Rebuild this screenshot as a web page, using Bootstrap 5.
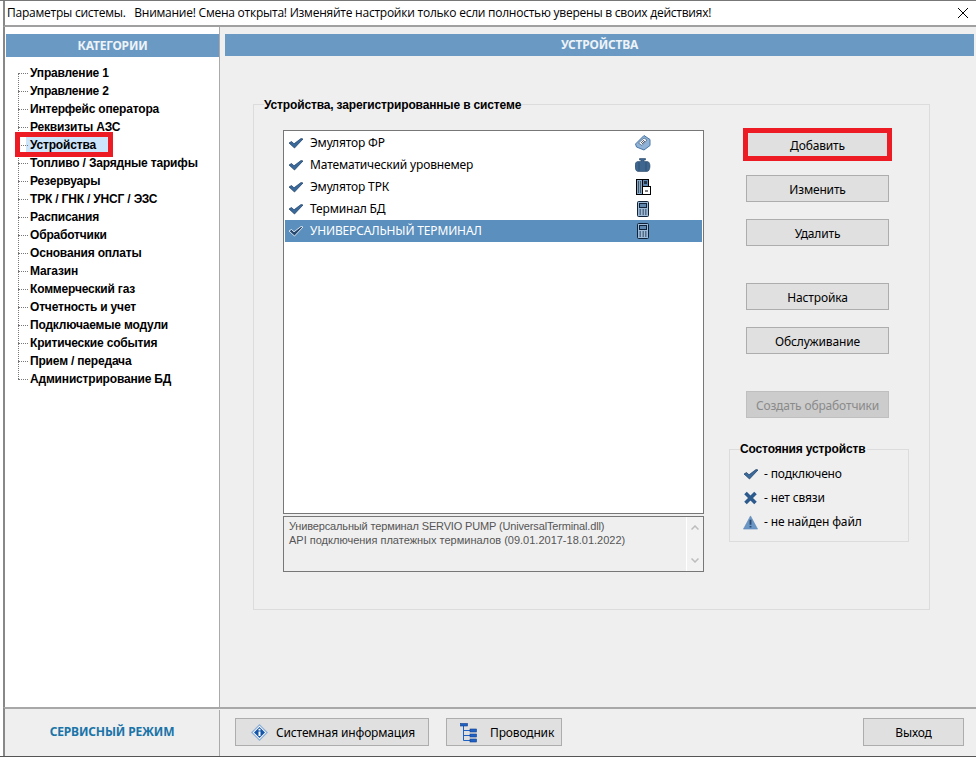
<!DOCTYPE html>
<html lang="ru">
<head>
<meta charset="utf-8">
<title>Параметры системы</title>
<link href="https://cdn.jsdelivr.net/npm/bootstrap@5.3.0/dist/css/bootstrap.min.css" rel="stylesheet">
<style>
html,body{margin:0;background:#fff;overflow:hidden}
body{font-family:"Noto Sans",sans-serif;font-size:12px;line-height:14px;letter-spacing:-.15px;color:#000}
.win{width:976px;height:757px;border-top:1px solid #777;border-bottom:1px solid #555}
.win-title{height:26px;margin-left:3px;border-left:2px solid #888;border-bottom:2px solid #a0a0a0;padding-left:2px;background:#fff;white-space:pre;font-family:"Open Sans",sans-serif;font-size:12px;letter-spacing:-.02em}
.win-x{margin-right:8px}
.win-body{height:680px;margin-left:3px;border-left:2px solid #888}
.side{width:215px;background:#fff;border-right:1px solid #aaa;padding-top:7px}
.side-head{margin-left:1px;height:23px;background:#6a9ac4;color:#eef3f8;font:700 12px/23px "Noto Sans",sans-serif;letter-spacing:-.2px;text-align:center}
.tree{list-style:none;margin:7px 0 0;padding:0 0 0 13px;font:700 12px/18px "Liberation Sans",sans-serif;letter-spacing:-.18px;position:relative}
.tree::before{content:"";position:absolute;left:13px;top:9px;bottom:9px;border-left:1px dotted #777}
.tree li{height:18px;padding-left:12px;position:relative;white-space:nowrap}
.tree li::before{content:"";position:absolute;left:0;top:9px;width:10px;border-top:1px dotted #777}
.tree-sel{background:#cde5fb;padding:1px 13px 1px 4px;margin-left:-4px}
.red-a{position:absolute;left:-3px;top:-4px;width:98px;height:25px;border:5px solid #ed1c24;pointer-events:none}
.pane{flex:1;background:#efefef;padding-top:7px}
.pane-head{margin:0 2px 0 5px;height:22px;background:#6a9ac4;color:#eef3f8;font:700 12px/22px "Noto Sans",sans-serif;letter-spacing:-.2px;text-align:center}
.gr1{margin:40px 46px 0 33px;height:514px;border:1px solid #dcdcdc;padding:18px 0 0 29px;min-width:0}
.gr1 legend,.gr2 legend{float:none;width:auto;padding:0;font:700 12px/14px "Liberation Sans",sans-serif;letter-spacing:-.15px}
.gr1 legend{margin:0 0 0 -19px;padding-top:2px}
.lst{width:421px;height:384px;border:1px solid #777;background:#fff;padding:1px}
.lst-row{height:22px;padding:0 2px 0 3px}
.lst-row.on{background:#5b8fbd;color:#fff}
.lst-txt{margin-left:7px;width:325px}
.lst-ico{width:16px;height:16px}
.dsc{width:421px;height:56px;margin-top:2px;border:1px solid #777;background:#efefef;padding:2px 5px;font:11px/14px "Liberation Sans",sans-serif;letter-spacing:0;color:#555}
.dsc::first-line{letter-spacing:-.15px}
.dsc-bar{position:absolute;right:0;top:0;bottom:0;width:17px;background:#f2f2f2;border-left:1px solid #fff}
.rcol{width:143px;margin-left:42px;padding-top:1px}
.wbtn{display:block;width:143px;height:27px;padding:2px 0 0;background:#e0e0e0;border:1px solid #adadad;border-radius:0;font:12px/14px "Noto Sans",sans-serif;letter-spacing:-.15px;color:#000}
.wbtn:hover{background:#e0e0e0;border-color:#adadad;color:#000}
.gap1{margin-top:17px}.gap2{margin-top:37px}
.wbtn-red{outline:5px solid #ed1c24;outline-offset:-2px;border-color:#e0e0e0}
.wbtn:disabled{background:#ccc;border-color:#bfbfbf;color:#8a8a8a;opacity:1}
.gr2{margin:24px 0 0 -17px;width:180px;height:100px;border:1px solid #dcdcdc;padding:0 0 0 13px}
.gr2 legend{margin:0 0 0 -3px;padding:0 2px 0 0}
.st-row{height:24px}
.st-row svg{margin-right:6px}
.st-first{margin-top:6px}
.foot{height:49px;margin-left:3px;border-left:2px solid #888;border-top:2px solid #a8a8a8;background:#efefef}
.foot-l{width:215px;border-right:1px solid #aaa;color:#1a74a8;font:700 12px/14px "Noto Sans",sans-serif;text-align:center;padding-bottom:2px;margin-top:1px}
.foot-r{flex:1;padding:9px 12px 0 15px}
.fbtn{height:28px;background:#e0e0e0;border:1px solid #adadad;border-radius:0;padding:1px 0 0;font:12px/14px "Noto Sans",sans-serif;letter-spacing:-.15px;color:#000}
.fbtn:hover{background:#e0e0e0;border-color:#adadad;color:#000}
.f1{width:194px;padding-left:15px}.f2{width:116px;margin-left:17px;padding-left:13px}.f3{width:101px;margin-left:auto}
.f1 svg{margin-right:8px}.f2 svg{margin-right:13px}
</style>
</head>
<body>
<svg width="0" height="0" class="position-absolute">
<defs>
<symbol id="i-check" viewBox="0 0 15 12"><path d="M1 6 3.500 4.500 6 6.800 13 1.500 15 2 6.500 11Z" fill="#3a6a9c" stroke="#1c3d63" stroke-width=".7"/></symbol>
<symbol id="i-checkw" viewBox="0 0 15 12"><path d="M1 6 3.500 4.500 6 6.800 13 1.500 15 2 6.500 11Z" fill="#26486e" stroke="#fff" stroke-width=".8"/></symbol>
<symbol id="i-x" viewBox="0 0 14 14"><path d="M2 2 12 12M12 2 2 12" stroke="#2c5a8c" stroke-width="3.600" fill="none"/></symbol>
<symbol id="i-warn" viewBox="0 0 16 16"><path d="M8 1 15.500 15H.5Z" fill="#6a96c6" stroke="#5d86b4" stroke-width=".6"/><path d="M8 5V10.400M8 11.600V13.400" stroke="#2c4a70" stroke-width="2"/></symbol>
<symbol id="i-fr" viewBox="0 0 16 16"><path d="M.5 9 9 .5 15 4.500V10.500L9 15 1.500 12Z" fill="#8fb2d6" stroke="#4a78a8"/><path d="M3.500 8 9 3 12 5 7 10.500Z" fill="#eef3f8" stroke="#44607e" stroke-width=".7"/><path d="M6 8 9 5M7 9 10 6" stroke="#223" stroke-width=".7"/></symbol>
<symbol id="i-tank" viewBox="0 0 16 16"><path d="M4.500 1.500H10.500V3H9V4.500H12C14 4.500 15 6.500 15 9S14 14.500 12 14.500H3C1 14.500 0 11.500 0 9S1 4.500 3 4.500H6V3H4.500Z" fill="#3e668f" stroke="#2b4a6c" stroke-width=".6"/><path d="M4 5V14M11 5V14" stroke="#2b4a6c" stroke-width=".7"/></symbol>
<symbol id="i-trk" viewBox="0 0 16 16"><rect x="1.500" y=".5" width="6" height="15" fill="#88a8cc" stroke="#000"/><path d="M3.500 2V14M5.500 2V14" stroke="#233" stroke-width=".7"/><rect x="7.500" y=".5" width="6" height="7" fill="#5b86b4" stroke="#000"/><rect x="9" y="2" width="3" height="3" fill="#234"/><rect x="7.500" y="7.500" width="8" height="8" fill="#fff" stroke="#000"/><path d="M10 12H13" stroke="#000"/></symbol>
<symbol id="i-term" viewBox="0 0 16 16"><g transform="translate(2 0)"><rect x=".5" y=".5" width="11" height="15" rx="1" fill="#9dbbd9" stroke="#0f2238"/><rect x="2.500" y="2.500" width="7" height="4" fill="#5f86ad" stroke="#0f2238"/><path d="M2.500 9H4M5.500 9H7M8 9H9.500M2.500 11H4M5.500 11H7M8 11H9.500M2.500 13H4M5.500 13H7M8 13H9.500" stroke="#0f2238"/></g></symbol>
<symbol id="i-info" viewBox="0 0 17 17"><path d="M8.500 0 17 8.500 8.500 17 0 8.500Z" fill="#8fb0d8"/><path d="M8.500 1.800 15.200 8.500 8.500 15.200 1.800 8.500Z" fill="#fff"/><path d="M8.500 3 14 8.500 8.500 14 3 8.500Z" fill="#1556a8"/><path d="M8.500 4.800V6.400M8.500 7.400V12" stroke="#fff" stroke-width="2"/></symbol>
<symbol id="i-tree" viewBox="0 0 17 20"><path d="M3.500 3V17.500H10M3.500 7.500H10M3.500 12.500H10" stroke="#1f62c4" fill="none"/><g fill="#1f62c4" stroke="#123f8c" stroke-width=".6"><rect x=".5" y=".5" width="7" height="2.500"/><rect x="10" y="6" width="6.500" height="3"/><rect x="10" y="11" width="6.500" height="3"/><rect x="10" y="16" width="6.500" height="3"/></g></symbol>
</defs>
</svg>

<div class="win">
  <div class="win-title d-flex align-items-center justify-content-between">
    <span>Параметры системы.   Внимание! Смена открыта! Изменяйте настройки только если полностью уверены в своих действиях!</span>
    <svg class="win-x" width="10" height="10" viewBox="0 0 10 10"><path d="M0 0 10 10M10 0 0 10" stroke="#000" stroke-width="1"/></svg>
  </div>
  <div class="win-body d-flex">
    <aside class="side">
      <div class="side-head">КАТЕГОРИИ</div>
      <ul class="tree">
        <li>Управление 1</li>
        <li>Управление 2</li>
        <li>Интерфейс оператора</li>
        <li>Реквизиты АЗС</li>
        <li><span class="tree-sel">Устройства</span><span class="red-a"></span></li>
        <li>Топливо / Зарядные тарифы</li>
        <li>Резервуары</li>
        <li>ТРК / ГНК / УНСГ / ЭЗС</li>
        <li>Расписания</li>
        <li>Обработчики</li>
        <li>Основания оплаты</li>
        <li>Магазин</li>
        <li>Коммерческий газ</li>
        <li>Отчетность и учет</li>
        <li>Подключаемые модули</li>
        <li>Критические события</li>
        <li>Прием / передача</li>
        <li>Администрирование БД</li>
      </ul>
    </aside>
    <main class="pane">
      <div class="pane-head">УСТРОЙСТВА</div>
      <fieldset class="gr1">
        <legend>Устройства, зарегистрированные в системе</legend>
        <div class="d-flex">
          <div>
            <div class="lst">
              <div class="lst-row d-flex align-items-center"><svg width="15" height="12"><use href="#i-check"/></svg><span class="lst-txt">Эмулятор ФР</span><svg class="lst-ico"><use href="#i-fr"/></svg></div>
              <div class="lst-row d-flex align-items-center"><svg width="15" height="12"><use href="#i-check"/></svg><span class="lst-txt">Математический уровнемер</span><svg class="lst-ico"><use href="#i-tank"/></svg></div>
              <div class="lst-row d-flex align-items-center"><svg width="15" height="12"><use href="#i-check"/></svg><span class="lst-txt">Эмулятор ТРК</span><svg class="lst-ico"><use href="#i-trk"/></svg></div>
              <div class="lst-row d-flex align-items-center"><svg width="15" height="12"><use href="#i-check"/></svg><span class="lst-txt">Терминал БД</span><svg class="lst-ico"><use href="#i-term"/></svg></div>
              <div class="lst-row on d-flex align-items-center"><svg width="15" height="12"><use href="#i-checkw"/></svg><span class="lst-txt">УНИВЕРСАЛЬНЫЙ ТЕРМИНАЛ</span><svg class="lst-ico"><use href="#i-term"/></svg></div>
            </div>
            <div class="dsc position-relative">
              Универсальный терминал SERVIO PUMP (UniversalTerminal.dll)<br>
              API подключения платежных терминалов (09.01.2017-18.01.2022)
              <div class="dsc-bar d-flex flex-column justify-content-between align-items-center py-2">
                <svg width="8" height="5" viewBox="0 0 8 5"><path d="M.5 4.500 4 1 7.500 4.500" stroke="#bdbdbd" stroke-width="1.500" fill="none"/></svg>
                <svg width="8" height="5" viewBox="0 0 8 5"><path d="M.5 .5 4 4 7.500 .5" stroke="#bdbdbd" stroke-width="1.500" fill="none"/></svg>
              </div>
            </div>
          </div>
          <div class="rcol">
            <button class="btn wbtn wbtn-red">Добавить</button>
            <button class="btn wbtn gap1">Изменить</button>
            <button class="btn wbtn gap1">Удалить</button>
            <button class="btn wbtn gap2">Настройка</button>
            <button class="btn wbtn gap1">Обслуживание</button>
            <button class="btn wbtn gap2" disabled>Создать обработчики</button>
            <fieldset class="gr2">
              <legend>Состояния устройств</legend>
              <div class="st-row st-first d-flex align-items-center"><svg width="15" height="12"><use href="#i-check"/></svg>- подключено</div>
              <div class="st-row d-flex align-items-center"><svg width="15" height="14"><use href="#i-x"/></svg>- нет связи</div>
              <div class="st-row d-flex align-items-center"><svg width="15" height="15"><use href="#i-warn"/></svg>- не найден файл</div>
            </fieldset>
          </div>
        </div>
      </fieldset>
    </main>
  </div>
  <footer class="foot d-flex">
    <div class="foot-l d-flex align-items-center justify-content-center">СЕРВИСНЫЙ РЕЖИМ</div>
    <div class="foot-r d-flex align-items-start">
      <button class="btn fbtn f1 d-flex align-items-center"><svg width="17" height="17"><use href="#i-info"/></svg>Системная информация</button>
      <button class="btn fbtn f2 d-flex align-items-center"><svg width="17" height="20"><use href="#i-tree"/></svg>Проводник</button>
      <button class="btn fbtn f3">Выход</button>
    </div>
  </footer>
</div>
<script src="https://cdn.jsdelivr.net/npm/bootstrap@5.3.0/dist/js/bootstrap.bundle.min.js"></script>
</body>
</html>
